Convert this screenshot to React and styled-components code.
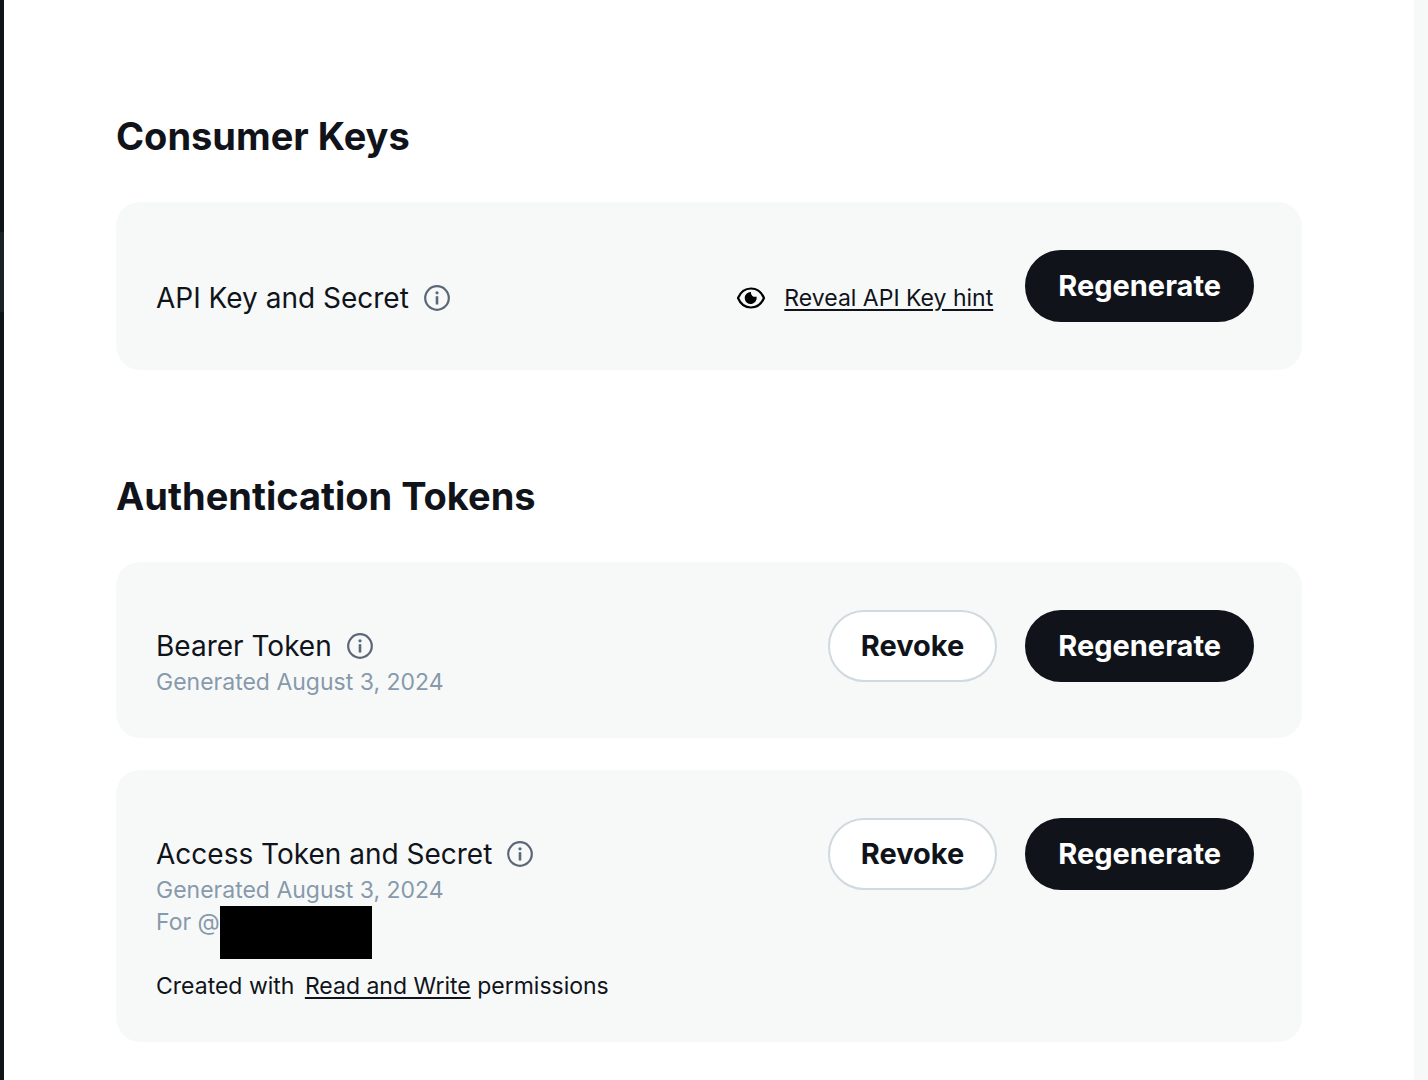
import React from 'react';
import styled, { createGlobalStyle } from 'styled-components';

const GlobalStyle = createGlobalStyle`
    * {
        box-sizing: border-box;
    }

    body {
        margin: 0;
        background: #ffffff;
        color: #10141a;
        font-family: Inter, "Liberation Sans", sans-serif;
    }
`;

const Page = styled.div`
    display: flex;
    min-height: 100vh;
`;

const NavEdge = styled.div`
    flex: 0 0 4px;
    padding-top: 232px;
    background: #0f1418;
`;

const ActiveMark = styled.div`
    height: 80px;
    background: #1b2226;
`;

const Gutter = styled.div`
    flex: 0 0 14px;
    background: #f7f9f9;
`;

const Content = styled.main`
    flex: 1;
    display: flex;
    flex-direction: column;
    gap: 102px;
    padding: 112px 112px 38px;
`;

const Section = styled.section`
    display: flex;
    flex-direction: column;
    gap: 32px;
`;

const SectionTitle = styled.h2`
    margin: 0 0 10px;
    font-size: 38px;
    line-height: 48px;
    font-weight: 700;
`;

const Card = styled.article`
    display: flex;
    justify-content: space-between;
    align-items: flex-start;
    padding: 48px 48px 40px 40px;
    border-radius: 24px;
    background: #f7f9f9;
`;

const Info = styled.div`
    display: flex;
    flex-direction: column;
    padding-top: ${({ $single }) => ($single ? '28px' : '16px')};
`;

const TokenName = styled.h3`
    display: flex;
    align-items: center;
    gap: 15px;
    margin: 0;
    font-size: 28px;
    line-height: 40px;
    font-weight: 400;
`;

const InfoButton = styled.button`
    display: flex;
    padding: 0;
    border: 0;
    background: none;
    color: #5b6776;
`;

const Meta = styled.p`
    margin: 0;
    color: #8799ab;
    font-size: 23px;
    line-height: 32px;
`;

const Redacted = styled.span`
    position: absolute;
    width: 152px;
    height: 53px;
    background: #000000;
`;

const Permissions = styled.p`
    margin: 32px 0 0;
    font-size: 23px;
    line-height: 32px;

    a {
        margin-left: 4px;
    }
`;

const TextLink = styled.a`
    color: inherit;
    font-size: 23px;
    line-height: 32px;
    text-decoration-thickness: 2px;
    text-underline-offset: 3px;
`;

const Actions = styled.div`
    display: flex;
    gap: 28px;
    padding-bottom: 8px;
`;

const Reveal = styled.div`
    display: flex;
    align-items: center;
    gap: 18px;
    margin-right: 4px;
    padding-top: 24px;
`;

const Button = styled.button`
    height: 72px;
    padding: 0 31px;
    border: 2px solid ${({ $primary }) => ($primary ? '#10141a' : '#cfd9de')};
    border-radius: 36px;
    background: ${({ $primary }) => ($primary ? '#10141a' : '#ffffff')};
    color: ${({ $primary }) => ($primary ? '#ffffff' : '#10141a')};
    font: 700 29px/40px Inter, "Liberation Sans", sans-serif;
`;

const InfoIcon = () => (
    <svg width="26" height="26" viewBox="0 0 26 26" fill="none" stroke="currentColor" strokeWidth="2.2">
        <circle cx="13" cy="13" r="11.8" />
        <path d="M13 11.2v8.300" strokeWidth="2.6" />
        <circle cx="13" cy="7.8" r="1.600" fill="currentColor" stroke="none" />
    </svg>
);

const EyeIcon = () => (
    <svg width="30" height="22" viewBox="0 0 30 22" fill="none">
        <path
            d="M2 11C4.500 5 9.500 1.500 15 1.500S25.500 5 28 11c-2.500 6-7.500 9.500-13 9.500S4.500 17 2 11z"
            stroke="#000000"
            strokeWidth="2.200"
            strokeLinejoin="round"
        />
        <path d="M15 5a4 4 0 0 0 5.500 4.500A6 6 0 1 1 15 5z" fill="#000000" />
    </svg>
);

const Token = ({ name, meta, children, actions }) => (
    <Card>
        <Info $single={!meta}>
            <TokenName>
                {name}
                <InfoButton type="button" aria-label={`About ${name}`}>
                    <InfoIcon />
                </InfoButton>
            </TokenName>
            {meta && <Meta>{meta}</Meta>}
            {children}
        </Info>
        <Actions>{actions}</Actions>
    </Card>
);

const App = () => (
    <>
        <GlobalStyle />
        <Page>
            <NavEdge>
                <ActiveMark />
            </NavEdge>
            <Content>
                <Section>
                    <SectionTitle>Consumer Keys</SectionTitle>
                    <Token
                        name="API Key and Secret"
                        actions={
                            <>
                                <Reveal>
                                    <EyeIcon />
                                    <TextLink href="#hint">Reveal API Key hint</TextLink>
                                </Reveal>
                                <Button $primary>Regenerate</Button>
                            </>
                        }
                    />
                </Section>
                <Section>
                    <SectionTitle>Authentication Tokens</SectionTitle>
                    <Token
                        name="Bearer Token"
                        meta="Generated August 3, 2024"
                        actions={
                            <>
                                <Button>Revoke</Button>
                                <Button $primary>Regenerate</Button>
                            </>
                        }
                    />
                    <Token
                        name="Access Token and Secret"
                        meta="Generated August 3, 2024"
                        actions={
                            <>
                                <Button>Revoke</Button>
                                <Button $primary>Regenerate</Button>
                            </>
                        }
                    >
                        <Meta>
                            For @<Redacted />
                        </Meta>
                        <Permissions>
                            Created with <TextLink href="#permissions">Read and Write</TextLink> permissions
                        </Permissions>
                    </Token>
                </Section>
            </Content>
            <Gutter />
        </Page>
    </>
);

export default App;
